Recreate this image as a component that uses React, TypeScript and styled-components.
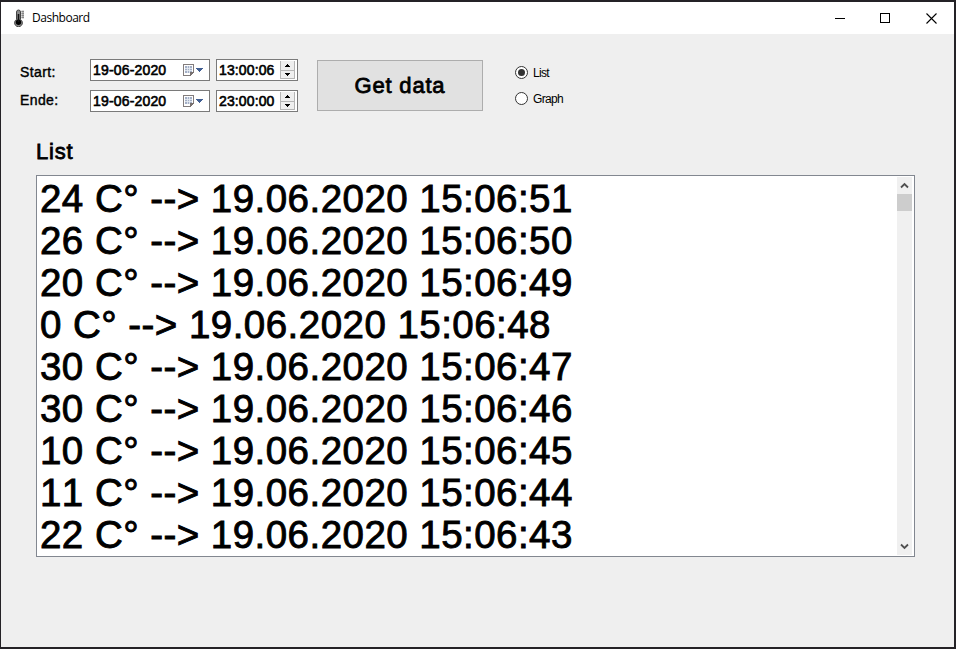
import React, { useState } from "react";
import styled, { createGlobalStyle } from "styled-components";

const GlobalStyle = createGlobalStyle`
  * { box-sizing: border-box; }
  body {
    margin: 0;
    overflow: hidden;
    background: #1f1d20;
    color: #000;
    font-family: "Liberation Sans", Arial, sans-serif;
    font-kerning: none;
  }
`;

const Desktop = styled.div`
  width: 956px;
  height: 649px;
  padding: 2px 2px 2px 1px;
  background: #242226;
`;

const Window = styled.main`
  display: flex;
  flex-direction: column;
  height: 645px;
  background: #efefef;
`;

const TitleBar = styled.header`
  display: flex;
  align-items: center;
  height: 32px;
  flex: none;
  padding-left: 12px;
  background: #fff;
`;

const Title = styled.span`
  flex: 1;
  margin-left: 7px;
  font: 12px/16px "Open Sans", "Noto Sans", sans-serif;
  letter-spacing: -0.48px;
`;

const Caption = styled.button`
  display: flex;
  align-items: center;
  justify-content: center;
  width: 45.5px;
  height: 30px;
  padding: 0;
  border: 0;
  background: none;
`;

const Toolbar = styled.section`
  display: flex;
  align-items: flex-start;
  height: 104px;
  flex: none;
  padding: 25px 0 0 19px;
`;

const Fields = styled.div`
  display: grid;
  grid-template-columns: 70px 120px 82px;
  grid-template-rows: 22px 22px;
  row-gap: 9px;
  column-gap: 0;
  width: 278px;
`;

const Label = styled.label<{ $top: number }>`
  padding-top: ${(p) => p.$top}px;
  font-size: 14px;
  line-height: 16px;
  letter-spacing: 0.4px;
  -webkit-text-stroke: 0.4px #000;
`;

const Field = styled.div<{ $gap?: number }>`
  display: flex;
  align-items: center;
  justify-content: space-between;
  height: 22px;
  width: ${(p) => (p.$gap ? 82 : 120)}px;
  margin-left: ${(p) => p.$gap ?? 0}px;
  padding: 0 ${(p) => (p.$gap ? 2 : 5)}px 0 2px;
  border: 1px solid #7a7a7a;
  background: #fff;
`;

const Value = styled.span<{ $tracking: number }>`
  font-size: 14px;
  line-height: 16px;
  white-space: nowrap;
  letter-spacing: ${(p) => p.$tracking}px;
  -webkit-text-stroke: 0.6px #000;
`;

const GetButton = styled.button`
  width: 166px;
  height: 51px;
  margin: 1px 0 0 19px;
  padding: 0;
  border: 1px solid #adadad;
  background: #e1e1e1;
  color: #000;
  font: 22px/24px "Liberation Sans", Arial, sans-serif;
  font-kerning: none;
  letter-spacing: 0.8px;
  -webkit-text-stroke: 0.8px #000;
`;

const Choices = styled.div`
  display: grid;
  grid-template-rows: 26px 26px;
  margin-left: 32px;
`;

const Choice = styled.button`
  display: flex;
  align-items: center;
  gap: 5px;
  padding: 0;
  border: 0;
  background: none;
  color: #000;
  font: 12px/16px "Liberation Sans", Arial, sans-serif;
  letter-spacing: -0.7px;
`;

const ChoiceText = styled.span`
  padding-top: 2px;
`;

const Ring = styled.span`
  display: flex;
  align-items: center;
  justify-content: center;
  width: 13px;
  height: 13px;
  border: 1px solid #333;
  border-radius: 50%;
  background: #fff;
`;

const Dot = styled.span`
  width: 7px;
  height: 7px;
  border-radius: 50%;
  background: #333;
`;

const Heading = styled.h1`
  margin: 0 0 0 35px;
  height: 37px;
  flex: none;
  font-size: 22px;
  font-weight: 400;
  line-height: 28px;
  letter-spacing: 0.8px;
  -webkit-text-stroke: 0.8px #000;
`;

const ListBox = styled.section`
  display: flex;
  width: 879px;
  height: 382px;
  margin-left: 35px;
  border: 1px solid #828790;
  background: #fff;
`;

const Rows = styled.ul`
  flex: 1;
  margin: 0;
  padding: 2px 0 0 3px;
  overflow: hidden;
  list-style: none;
`;

const Row = styled.li`
  height: 42px;
  font-size: 38.5px;
  line-height: 42px;
  white-space: pre;
  letter-spacing: 0.46px;
  -webkit-text-stroke: 0.9px #000;
`;

const ScrollBar = styled.div`
  display: flex;
  flex-direction: column;
  width: 15px;
  margin: 1px 2px 1px 0;
  background: #f0f0f0;
`;

const Arrow = styled.div`
  display: flex;
  align-items: center;
  justify-content: center;
  height: 17px;
`;

const Thumb = styled.div`
  height: 17px;
  margin-bottom: auto;
  background: #cdcdcd;
`;

const Thermometer = () => (
  <svg width="12" height="18" viewBox="0 0 12 18">
    <path d="M3.5 10.5V3a2 2 0 0 1 4 0v7.5a3.9 3.9 0 1 1-4 0Z" fill="#8a8a8a" stroke="#444" />
    <circle cx="5.5" cy="13.3" r="2.7" fill="#000" />
    <path d="M5.5 5v8" stroke="#111" strokeWidth="1.6" />
    <path d="M8.5 1.5h2.5v8H8.5Z" fill="#b5b5b5" />
    <path d="M8.5 2.5h2.5M8.5 4.5h2.5M8.5 6.5h2.5M8.5 8.5h2.5" stroke="#888" />
  </svg>
);

const CalendarDrop = () => (
  <svg width="21" height="14" viewBox="0 0 21 14" shapeRendering="crispEdges">
    <path d="M0 1h11v9l-3 3H0Z" fill="#fff" />
    <path d="M.5 1.5h10v8l-3 3h-7Z" fill="none" stroke="#827c7c" />
    <path d="M2 3h7v7H2Z" fill="#a3afc6" />
    <path d="M2 5.5h7M2 7.5h7M4.5 3v7M6.5 3v7" stroke="#e9edf4" strokeWidth=".8" />
    <path d="M7 13V9h4v1h-1v1H9v1H8v1Z" fill="#77706f" />
    <path d="M13 5h7v1h-1v1h-1v1h-1v1h-1V8h-1V7h-1V6h-1Z" fill="#415f93" />
  </svg>
);

const Spinner = () => (
  <svg width="15" height="18" viewBox="0 0 15 18" shapeRendering="crispEdges">
    <path d="M0 0h15v18H0Z" fill="#efefef" />
    <path d="M.5 0v17.5h14V0M0 9h15" fill="none" stroke="#b5b5b5" />
    <path d="M7 3h1v1h1v1h1v1H5V5h1V4h1ZM5 12h5v1H9v1H8v1H7v-1H6v-1H5Z" fill="#000" />
  </svg>
);

const Chevron = ({ down = false }: { down?: boolean }) => (
  <svg width="9" height="7" viewBox="0 0 9 7">
    <path d={down ? "M1 1.5l3.5 3.5 3.5-3.5" : "M1 5.5l3.5-3.5 3.5 3.5"} fill="none" stroke="#505050" strokeWidth="1.8" />
  </svg>
);

const ranges = [
  { label: "Start:", top: 5, date: "19-06-2020", time: "13:00:06" },
  { label: "Ende:", top: 2, date: "19-06-2020", time: "23:00:00" },
];

const readings = [
  [24, 51], [26, 50], [20, 49], [0, 48], [30, 47], [30, 46], [10, 45], [11, 44], [22, 43],
];

export default function App() {
  const [view, setView] = useState("List");
  return (
    <Desktop>
      <GlobalStyle />
      <Window>
        <TitleBar>
          <Thermometer />
          <Title>Dashboard</Title>
          <Caption aria-label="Minimize">
            <svg width="11" height="11"><path d="M0 5.5h10" stroke="#000" shapeRendering="crispEdges" /></svg>
          </Caption>
          <Caption aria-label="Maximize">
            <svg width="11" height="10"><path d="M.5.5h9v9h-9Z" fill="none" stroke="#000" shapeRendering="crispEdges" /></svg>
          </Caption>
          <Caption aria-label="Close">
            <svg width="11" height="11"><path d="M.5.5l10 10M10.5.5l-10 10" stroke="#000" strokeWidth="1.1" /></svg>
          </Caption>
        </TitleBar>
        <Toolbar>
          <Fields>
            {ranges.map((r) => (
              <React.Fragment key={r.label}>
                <Label $top={r.top}>{r.label}</Label>
                <Field>
                  <Value $tracking={0.17}>{r.date}</Value>
                  <CalendarDrop />
                </Field>
                <Field $gap={6}>
                  <Value $tracking={0.12}>{r.time}</Value>
                  <Spinner />
                </Field>
              </React.Fragment>
            ))}
          </Fields>
          <GetButton>Get data</GetButton>
          <Choices>
            {["List", "Graph"].map((name) => (
              <Choice key={name} role="radio" aria-checked={view === name} onClick={() => setView(name)}>
                <Ring>{view === name && <Dot />}</Ring>
                <ChoiceText>{name}</ChoiceText>
              </Choice>
            ))}
          </Choices>
        </Toolbar>
        <Heading>List</Heading>
        <ListBox>
          <Rows>
            {readings.map(([temp, sec]) => (
              <Row key={sec}>{`${temp} C° --> 19.06.2020 15:06:${sec}`}</Row>
            ))}
          </Rows>
          <ScrollBar>
            <Arrow><Chevron /></Arrow>
            <Thumb />
            <Arrow><Chevron down /></Arrow>
          </ScrollBar>
        </ListBox>
      </Window>
    </Desktop>
  );
}
